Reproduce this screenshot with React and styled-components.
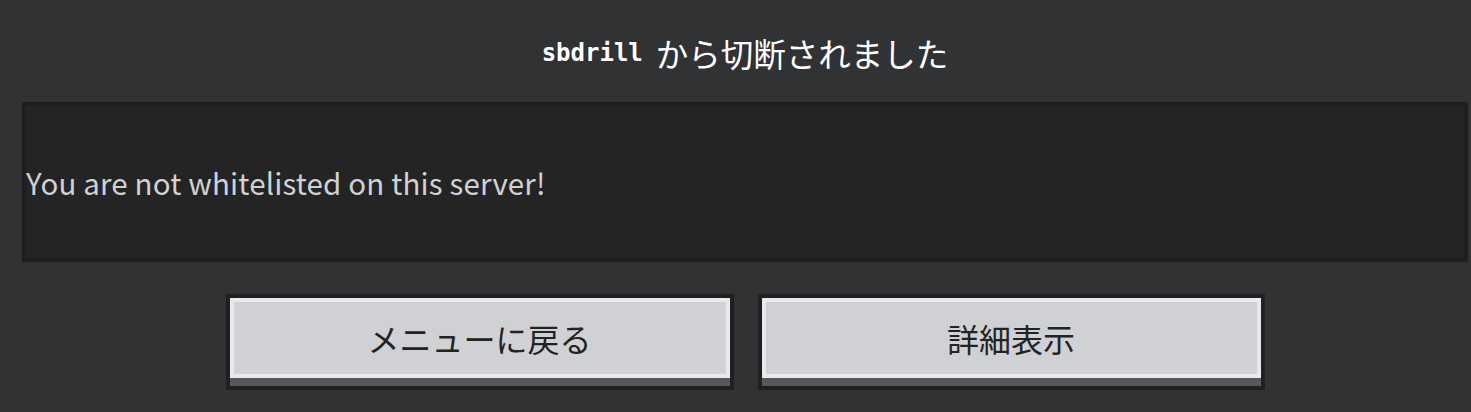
import React from "react";
import styled, { createGlobalStyle } from "styled-components";

const GlobalStyle = createGlobalStyle`
  html, body {
    margin: 0;
    padding: 0;
    background: #313234;
  }
  body {
    font-family: "Noto Sans CJK JP", "Noto Sans", sans-serif;
  }
`;

const Screen = styled.div`
  display: flex;
  flex-direction: column;
  align-items: center;
  width: 1471px;
  height: 412px;
  box-sizing: border-box;
  padding: 0 3px 0 22px;
  background: #313234;
`;

const Title = styled.div`
  height: 102px;
  display: flex;
  align-items: center;
  justify-content: center;
  padding-top: 2px;
  box-sizing: border-box;
  color: #ffffff;
  font-size: 32.5px;
  gap: 13px;
`;

const ServerName = styled.span`
  font-family: "DejaVu Sans Mono", "Liberation Mono", monospace;
  font-weight: bold;
  font-size: 24px;
  padding-top: 2px;
`;

const MessagePanel = styled.div`
  align-self: stretch;
  height: 160px;
  box-sizing: border-box;
  border: 4px solid #1e1e1f;
  background: #242424;
  display: flex;
  align-items: center;
  color: #d0d1d4;
  font-size: 29.5px;
  letter-spacing: 0.15px;
`;

const ButtonRow = styled.div`
  display: flex;
  gap: 24px;
  margin-top: 32px;
`;

const Button = styled.button`
  width: ${(p) => p.$width}px;
  padding: 0 0 8px 0;
  border: 4px solid #1f2022;
  background: #58585a;
  cursor: pointer;
  font-family: inherit;
`;

const ButtonFace = styled.div`
  height: 80px;
  box-sizing: border-box;
  border: 4px solid #e8e9eb;
  background: #d0d1d4;
  display: flex;
  align-items: center;
  justify-content: center;
  color: #232323;
  font-size: 32px;
`;

export default function App() {
  return (
    <>
      <GlobalStyle />
      <Screen>
        <Title>
          <ServerName>sbdrill</ServerName>
          <span>から切断されました</span>
        </Title>
        <MessagePanel>You are not whitelisted on this server!</MessagePanel>
        <ButtonRow>
          <Button $width={508}>
            <ButtonFace>メニューに戻る</ButtonFace>
          </Button>
          <Button $width={507}>
            <ButtonFace>詳細表示</ButtonFace>
          </Button>
        </ButtonRow>
      </Screen>
    </>
  );
}
